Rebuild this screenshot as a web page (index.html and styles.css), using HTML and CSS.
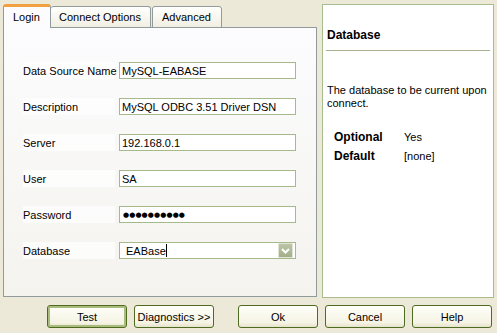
FILE: index.html
```html
<!DOCTYPE html>
<html lang="en">
<head>
    <meta charset="UTF-8">
    <meta name="viewport" content="width=device-width, initial-scale=1.0">
    <title>MySQL Connector/ODBC</title>
    <link rel="stylesheet" href="styles.css">
</head>
<body>
    <div class="window">
        <div class="main">
            <div class="tabbox">
                <div class="tabs">
                    <div class="tab active">Login</div>
                    <div class="tab tab-connect">Connect Options</div>
                    <div class="tab tab-advanced">Advanced</div>
                </div>
                <div class="panel">
                    <div class="form">
                        <label class="field-label" for="dsn">Data Source Name</label>
                        <input class="field" type="text" id="dsn" value="MySQL-EABASE">

                        <label class="field-label" for="desc">Description</label>
                        <input class="field" type="text" id="desc" value="MySQL ODBC 3.51 Driver DSN">

                        <label class="field-label" for="server">Server</label>
                        <input class="field" type="text" id="server" value="192.168.0.1">

                        <label class="field-label" for="user">User</label>
                        <input class="field" type="text" id="user" value="SA">

                        <label class="field-label" for="pwd">Password</label>
                        <div class="field password" id="pwd">●●●●●●●●●●</div>

                        <label class="field-label" for="db">Database</label>
                        <div class="field combo" id="db">
                            <span class="combo-text">EABase</span><span class="caret"></span>
                            <span class="combo-btn">
                                <svg width="13" height="13" viewBox="0 0 13 13">
                                    <path d="M3 5 L6.5 8.5 L10 5" fill="none" stroke="#fff" stroke-width="2"/>
                                </svg>
                            </span>
                        </div>
                    </div>
                </div>
            </div>

            <div class="help">
                <div class="help-title">Database</div>
                <p class="help-text">The database to be current upon connect.</p>
                <div class="props">
                    <span class="prop-name">Optional</span><span>Yes</span>
                    <span class="prop-name">Default</span><span>[none]</span>
                </div>
            </div>
        </div>

        <div class="buttons">
            <button class="btn default btn-test">Test</button>
            <button class="btn btn-diag">Diagnostics &gt;&gt;</button>
            <button class="btn btn-ok">Ok</button>
            <button class="btn btn-cancel">Cancel</button>
            <button class="btn btn-help">Help</button>
        </div>
    </div>
</body>
</html>
```

FILE: styles.css
```css
* {
    margin: 0;
    padding: 0;
    box-sizing: border-box;
    font-family: 'Liberation Sans', Arial, sans-serif;
}

body {
    background: #ece9d8;
    font-size: 11px;
    color: #000;
}

.window {
    width: 497px;
    height: 333px;
    padding-top: 4px;
}

.main {
    display: flex;
}

.tabbox {
    margin-left: 3px;
    width: 314px;
}

.tabs {
    display: flex;
    align-items: flex-end;
    height: 24px;
    margin-bottom: -1px;
    position: relative;
    z-index: 1;
}

.tab {
    height: 22px;
    padding: 4px 0 0 8px;
    border: 1px solid #919b9c;
    border-radius: 3px 3px 0 0;
    background: linear-gradient(#fffffd, #f1efe3);
}

.tab.active {
    width: 48px;
    height: 24px;
    padding: 4px 0 0 9px;
    border-top: 3px solid #f0a040;
    border-bottom: none;
    background: #fcfcfe;
}

.tab-connect {
    width: 100px;
    border-left: none;
}

.tab-advanced {
    width: 70px;
    margin-left: 1px;
    padding-left: 9px;
}

.panel {
    height: 270px;
    border: 1px solid #919b9c;
    background: linear-gradient(#fcfcfe, #f4f3ee);
    padding: 34px 0 0 19px;
}

.form {
    display: grid;
    grid-template-columns: 96px 177px;
    grid-auto-rows: 17px;
    row-gap: 19px;
}

.field-label {
    display: flex;
    align-items: center;
    width: 92px;
    white-space: nowrap;
    background: rgba(255, 255, 255, 0.7);
}

.field {
    height: 17px;
    border: 1px solid #a5b98a;
    background: #fff;
    font-size: 11px;
    padding: 0 2px;
    outline: none;
}

.password {
    display: flex;
    align-items: center;
    font-family: 'DejaVu Sans', sans-serif;
    font-size: 7px;
    letter-spacing: 0.1px;
    padding-left: 3px;
}

.combo {
    display: flex;
    align-items: center;
    padding-left: 6px;
}

.caret {
    width: 1px;
    height: 13px;
    background: #000;
}

.combo-btn {
    margin-left: auto;
    width: 15px;
    height: 15px;
    display: flex;
    align-items: center;
    justify-content: center;
    border: 1px solid #dfe4d4;
    border-radius: 1px;
    background: linear-gradient(#bcc6a6, #a3ae8a);
}

.help {
    margin-left: 5px;
    width: 172px;
    height: 294px;
    border: 1px solid #a9bc8e;
    background: #fff;
}

.help-title {
    margin: 0 3px;
    padding: 23px 0 8px 1px;
    line-height: 14px;
    font-size: 12px;
    font-weight: bold;
    border-bottom: 1px solid #a8b08f;
}

.help-text {
    margin: 33px 0 0 4px;
    line-height: 13px;
}

.props {
    display: grid;
    grid-template-columns: 70px auto;
    grid-auto-rows: 19px;
    align-items: center;
    margin: 17px 0 0 11px;
}

.prop-name {
    font-weight: bold;
    font-size: 12px;
}

.buttons {
    display: flex;
    margin-top: 7px;
}

.btn {
    width: 80px;
    height: 23px;
    border: 1px solid #4f6b21;
    border-radius: 3px;
    background: linear-gradient(#fffffa, #f5f3e3 80%, #e6e2cc);
    font-size: 11px;
    color: #000;
}

.btn.default {
    box-shadow: inset 0 0 0 2px #a9bc7e;
}

.btn-test {
    margin-left: 47px;
}

.btn-diag {
    margin-left: 7px;
}

.btn-ok {
    margin-left: 24px;
}

.btn-cancel,
.btn-help {
    margin-left: 7px;
}
```
